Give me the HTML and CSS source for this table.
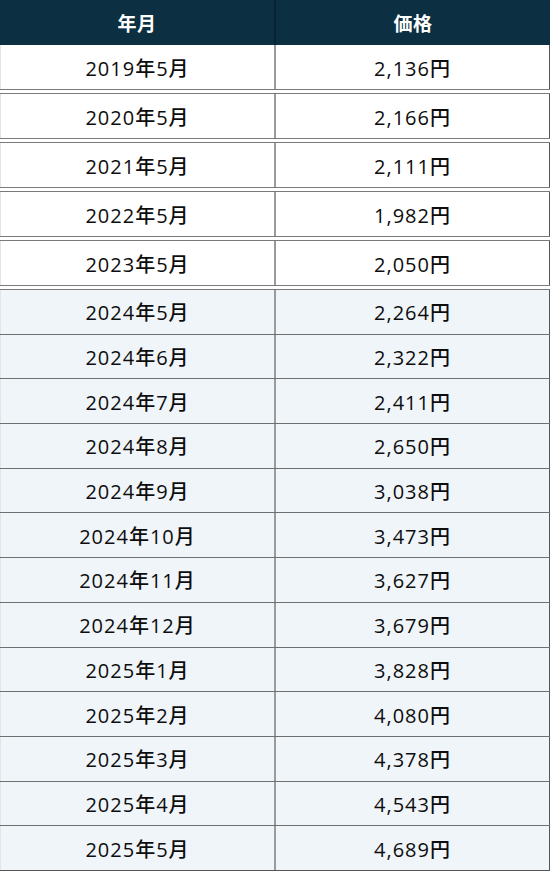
FILE: index.html
```html
<!DOCTYPE html>
<html lang="ja">
<head>
<meta charset="utf-8">
<link rel="stylesheet" href="styles.css">
</head>
<body>
<div class="table">
  <div class="row head"><div class="cell">年月</div><div class="cell">価格</div></div>
  <div class="row plain first"><div class="cell">2019年5月</div><div class="cell">2,136円</div></div>
  <div class="row plain"><div class="cell">2020年5月</div><div class="cell">2,166円</div></div>
  <div class="row plain"><div class="cell">2021年5月</div><div class="cell">2,111円</div></div>
  <div class="row plain"><div class="cell">2022年5月</div><div class="cell">1,982円</div></div>
  <div class="row plain"><div class="cell">2023年5月</div><div class="cell">2,050円</div></div>
  <div class="blue-block">
    <div class="row tint"><div class="cell">2024年5月</div><div class="cell">2,264円</div></div>
    <div class="row tint"><div class="cell">2024年6月</div><div class="cell">2,322円</div></div>
    <div class="row tint"><div class="cell">2024年7月</div><div class="cell">2,411円</div></div>
    <div class="row tint"><div class="cell">2024年8月</div><div class="cell">2,650円</div></div>
    <div class="row tint"><div class="cell">2024年9月</div><div class="cell">3,038円</div></div>
    <div class="row tint"><div class="cell">2024年10月</div><div class="cell">3,473円</div></div>
    <div class="row tint"><div class="cell">2024年11月</div><div class="cell">3,627円</div></div>
    <div class="row tint"><div class="cell">2024年12月</div><div class="cell">3,679円</div></div>
    <div class="row tint"><div class="cell">2025年1月</div><div class="cell">3,828円</div></div>
    <div class="row tint"><div class="cell">2025年2月</div><div class="cell">4,080円</div></div>
    <div class="row tint"><div class="cell">2025年3月</div><div class="cell">4,378円</div></div>
    <div class="row tint"><div class="cell">2025年4月</div><div class="cell">4,543円</div></div>
    <div class="row tint"><div class="cell">2025年5月</div><div class="cell">4,689円</div></div>
  </div>
</div>
</body>
</html>
```

FILE: styles.css
```css
html, body {
  margin: 0;
  padding: 0;
  background: #ffffff;
}

.table {
  width: 550px;
  height: 871px;
  display: flex;
  flex-direction: column;
  font-family: "Open Sans", "Noto Sans CJK JP", sans-serif;
  font-size: 20px;
  font-weight: 500;
  letter-spacing: 1px;
  color: #0d0d0d;
  background: #ffffff;
  overflow: hidden;
}

.row {
  display: grid;
  grid-template-columns: 276px 274px;
  box-sizing: border-box;
}

.cell {
  display: flex;
  align-items: center;
  justify-content: center;
  box-sizing: border-box;
}

.cell:first-child {
  border-right: 2px solid #9a9a9a;
  border-left: 1px solid #e4e4e4;
}

.cell:last-child {
  border-right: 1px solid #555;
}

.head {
  height: 45px;
  background: #0c2f41;
  color: #ffffff;
  font-size: 19px;
  font-weight: 600;
  letter-spacing: 0.5px;
}

.head .cell:first-child {
  border-right: 2px solid #082433;
  border-left: none;
}

.head .cell:last-child {
  border-right: none;
}

.plain {
  height: 46px;
  border-top: 1px solid #7a7a7a;
  border-bottom: 1px solid #7a7a7a;
  margin-top: 3px;
  background: #ffffff;
}

.plain.first {
  height: 45px;
  border-top: none;
  margin-top: 0;
}

.blue-block {
  margin-top: 3px;
  border-top: 1px solid #7a7a7a;
  flex: 1;
  display: flex;
  flex-direction: column;
  background: #f0f5fa;
}

.tint {
  flex: 1;
  border-bottom: 1px solid #6f6f6f;
  background: #f0f5fa;
}

.tint:last-child {
  border-bottom: 1px solid #555;
}
```
